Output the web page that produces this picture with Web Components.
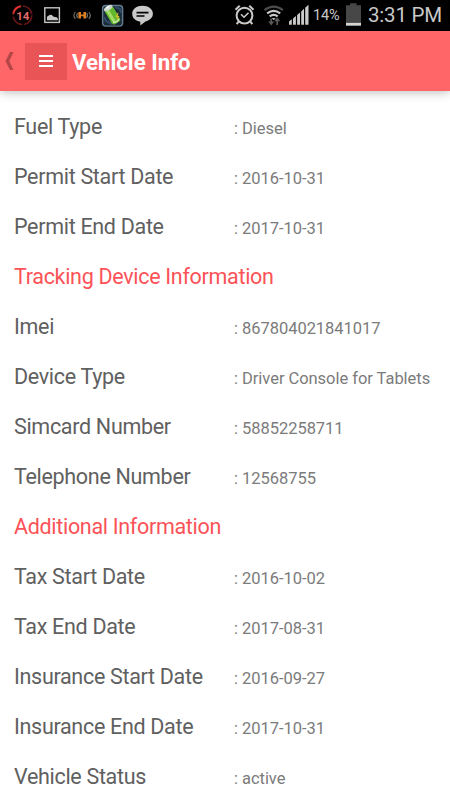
<!DOCTYPE html>
<html lang="en"><head><meta charset="utf-8"><title>Vehicle Info</title>
<style>html,body{margin:0;height:100%;overflow:hidden;background:#fff;font-family:Roboto,"Liberation Sans",sans-serif}</style></head>
<body>
<vehicle-screen></vehicle-screen>
<script>
const define = (name, html) => customElements.define(name, class extends HTMLElement {
  constructor() {
    super();
    this.attachShadow({mode: 'open'}).innerHTML = html;
  }
});

define('status-bar', `<style>
:host{display:flex;height:31px;background:#000;color:#c8c8c8;box-sizing:border-box}
svg{display:block;flex:none}
.pct{font-size:14.5px;line-height:32px;width:32px;margin-left:3px;white-space:nowrap;letter-spacing:-.1px}
.time{font-size:20.5px;line-height:31px;margin-left:3px;white-space:nowrap;letter-spacing:-.2px}
.badge{font:bold 11.5px/31px Roboto,sans-serif;fill:#e06a6a}
</style>
<svg width="160" height="31" viewBox="0 0 160 31" fill="none">
 <circle cx="22.5" cy="15.3" r="9.3" stroke="#641719" stroke-width="1.7" stroke-dasharray="13 1.6"/>
 <path d="M13.3 13.5a9.3 9.3 0 0 1 7.5-7.3" stroke="#dc3030" stroke-width="1.9"/>
 <text class="badge" x="22.8" y="19.5" text-anchor="middle">14</text>
 <rect x="44.8" y="7.8" width="14.6" height="14.6" stroke="#c5c5c5" stroke-width="1.4"/>
 <path d="M47 20.3v-3.5l2.5-1.8 2-.2 2.2 2 3 .4 1.2 1.4v1.7z" fill="#c5c5c5"/>
 <g stroke="#77736c" stroke-width="1.1"><path d="M75.4 12q-3.1 3.4 0 6.8M77.6 13q-1.8 2.4 0 4.8M88.8 12q3.1 3.4 0 6.8M86.6 13q1.8 2.4 0 4.8"/></g>
 <path d="M78.4 12h2.6v2.5h2.4V12H86v6.6h-2.6v-2.3H81v2.3h-2.6z" fill="#d97c22"/>
 <rect x="102.6" y="5.5" width="20" height="20.6" rx="3" fill="#1c2c3b" stroke="#657d91" stroke-width="1.4"/>
 <path d="M104 17l2 4 6 3M115 7l5 2 1 4" stroke="#314d68" stroke-width="2"/>
 <g transform="rotate(-31 112 15)"><rect x="107.5" y="7" width="9.6" height="17.5" rx="3" fill="#63b82c"/><rect x="109" y="8.2" width="3" height="14.5" rx="1.5" fill="#a5dc68"/><ellipse cx="112.3" cy="7.2" rx="4.8" ry="2.2" fill="#c9d5c7"/><ellipse cx="112.3" cy="6.2" rx="2.2" ry="1.2" fill="#ecefea"/><path d="M109 22q3.5 2 7 0" stroke="#c9e7b4" stroke-width="1.5"/></g>
 <path d="M117.5 13l-2.2 4h2.2l-1 4 3-5h-2l1-3z" fill="#d8b82d"/>
 <path d="M142.5 5.8c6 0 10.4 3.5 10.4 8 0 3.7-3 6.7-7.4 7.7l-5.2 4v-3.8c-4.8-.6-8.1-3.8-8.1-7.9 0-4.5 4.3-8 10.3-8z" fill="#c9c9c9"/>
 <path d="M136.5 12.6h12M136.5 16h8" stroke="#000" stroke-width="1.6"/>
</svg>
<svg width="150" height="31" viewBox="160 0 150 31" fill="none">
 <g stroke="#cbcbcb" stroke-width="2"><circle cx="244.5" cy="15.6" r="7.9"/><path d="M235.5 9.7l4.2-4M253.5 9.7l-4.2-4M238.8 21.5l-2.2 2.6M250.2 21.5l2.2 2.6"/><path d="M241 14.2l3 3 4.5-4.5" stroke-width="1.6"/></g>
 <g stroke-width="2.2"><path d="M264.5 10.2q9.2-7 18.4 0" stroke="#4c4c4c"/><path d="M267.2 13.3q6.5-5 13 0M269.7 16.3q4-3 8 0" stroke="#cbcbcb"/></g>
 <path d="M271.7 18.6l2 1.3 2-1.3q-2-1.3-4 0z" fill="#cbcbcb"/>
 <path d="M271.2 18.5v4M277.2 21v4" stroke="#5a5a5a" stroke-width="1.7"/><path d="M268.2 21.5h6l-3 4zM274.2 21.3h6l-3-4z" fill="#5a5a5a"/>
 <path d="M289 24.8v-3.3l2.8-2.2v5.5zM293 24.8v-6.4l2.9-2.5v8.9zM297.1 24.8v-9.8l2.9-2.6v12.4zM301.2 24.8V11.4l2.8-2.6v16zM305.2 24.8V7.8l3.3-3v20z" fill="#cbcbcb"/>
</svg>
<span class="pct">14%</span>
<svg width="20" height="31" viewBox="0 0 20 31"><path d="M5.2 3.3h6.3v1.9H16v17.3H1V5.2h4.2z" fill="#474747"/><path d="M1 22.7h15v3H1z" fill="#d8d8d8"/></svg>
<span class="time">3:31 PM</span>`);

define('app-header', `<style>
:host{display:flex;align-items:center;height:60px;background:#ff6668;box-shadow:0 1px 10px rgba(0,0,0,.28);position:relative}
.back{margin-left:5px;display:block}
.menu{width:42px;height:37px;margin-left:10px;margin-top:1px;background:#e95557;display:flex;align-items:center;justify-content:center}
.menu svg{margin-top:-2px}
h1{margin:2px 0 0 5px;font-size:22.2px;line-height:30px;font-weight:700;color:#fff;white-space:nowrap}
</style>
<svg class="back" width="10" height="20" viewBox="0 0 10 20"><path d="M5 1h3.5L4.3 10l4.2 9H5L.5 10z" fill="#b54648"/></svg>
<div class="menu"><svg width="14" height="14" viewBox="0 0 14 14"><path d="M0 2h14M0 7h14M0 12h14" stroke="#fff" stroke-width="2"/></svg></div>
<h1><slot></slot></h1>`);

define('info-row', `<style>
:host{display:grid;grid-template-columns:220px 1fr;height:50px;align-items:baseline;white-space:nowrap}
.label{font-size:21.5px;letter-spacing:-.31px;line-height:50px;color:#606060}
.value{font-size:16.5px;letter-spacing:-.04px;line-height:30px;color:#7b7b7b}
</style><span class="label"><slot></slot></span><span class="value"><slot name="value"></slot></span>`);

define('section-title', `<style>:host{display:block;height:50px;line-height:50px;font-size:21.5px;letter-spacing:-.31px;color:#fc5257;white-space:nowrap}</style><slot></slot>`);

define('vehicle-screen', `<style>
:host{display:flex;flex-direction:column;width:450px;height:800px;overflow:hidden}
main{padding:11px 0 0 14px}
status-bar,app-header{flex:none}
</style>
<status-bar></status-bar>
<app-header>Vehicle Info</app-header>
<main>
<info-row>Fuel Type<span slot="value">: Diesel</span></info-row>
<info-row>Permit Start Date<span slot="value">: 2016-10-31</span></info-row>
<info-row>Permit End Date<span slot="value">: 2017-10-31</span></info-row>
<section-title>Tracking Device Information</section-title>
<info-row>Imei<span slot="value">: 867804021841017</span></info-row>
<info-row>Device Type<span slot="value">: Driver Console for Tablets</span></info-row>
<info-row>Simcard Number<span slot="value">: 58852258711</span></info-row>
<info-row>Telephone Number<span slot="value">: 12568755</span></info-row>
<section-title>Additional Information</section-title>
<info-row>Tax Start Date<span slot="value">: 2016-10-02</span></info-row>
<info-row>Tax End Date<span slot="value">: 2017-08-31</span></info-row>
<info-row>Insurance Start Date<span slot="value">: 2016-09-27</span></info-row>
<info-row>Insurance End Date<span slot="value">: 2017-10-31</span></info-row>
<info-row>Vehicle Status<span slot="value">: active</span></info-row>
</main>`);
</script>
</body></html>
